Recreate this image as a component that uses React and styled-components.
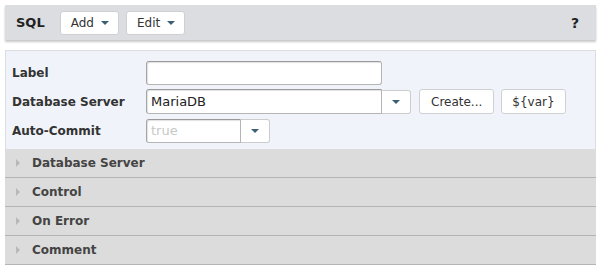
import React from "react";
import styled, { createGlobalStyle } from "styled-components";

const GlobalStyle = createGlobalStyle`
  html, body {
    margin: 0;
    padding: 0;
    background: #ffffff;
    font-family: "DejaVu Sans", Verdana, sans-serif;
    font-size: 12px;
    color: #333;
  }
`;

const Page = styled.div`
  padding: 5px 6px 0 5px;
  width: 591px;
`;

const Toolbar = styled.div`
  display: flex;
  align-items: center;
  height: 35px;
  background: #dcdde0;
  box-shadow: 0 2px 2px rgba(0, 0, 0, 0.22);
  padding: 0 17px 0 11px;
  gap: 7px;
`;

const Title = styled.div`
  font-weight: bold;
  font-size: 13px;
  color: #222;
  margin-right: 8px;
`;

const MenuButton = styled.button`
  display: flex;
  align-items: center;
  gap: 7px;
  height: 24px;
  padding: 0 9px 0 10px;
  background: #fff;
  border: 1px solid #cfd0d3;
  border-radius: 3px;
  font-family: inherit;
  font-size: 12px;
  color: #333;
`;

const Caret = styled.span`
  width: 0;
  height: 0;
  border-left: 4px solid transparent;
  border-right: 4px solid transparent;
  border-top: 4px solid #3d5f73;
`;

const Help = styled.div`
  margin-left: auto;
  font-weight: bold;
  font-size: 14px;
  color: #222;
`;

const Form = styled.div`
  margin-top: 10px;
  background: #f0f4fa;
  border: 1px solid #dcdde0;
  border-bottom: none;
  padding: 9px 0 6px 6px;
  display: flex;
  flex-direction: column;
  gap: 4px;
`;

const Row = styled.div`
  display: flex;
  align-items: center;
  height: 25px;
`;

const Label = styled.div`
  width: 134px;
  font-weight: bold;
  font-size: 12px;
  color: #333;
`;

const TextBox = styled.div`
  box-sizing: border-box;
  width: ${(p) => p.$w}px;
  height: ${(p) => (p.$h || 24)}px;
  background: #fff;
  border: 1px solid #b5b5b5;
  border-top-color: #9a9a9a;
  border-left-color: #a5a5a5;
  border-radius: ${(p) => (p.$joined ? "3px 0 0 3px" : "3px")};
  box-shadow: inset 1px 1px 1px rgba(0, 0, 0, 0.12);
  padding: 0 4px;
  display: flex;
  align-items: center;
  font-size: 13px;
  color: ${(p) => (p.$muted ? "#c8c8c8" : "#222")};
`;

const DropButton = styled.div`
  box-sizing: border-box;
  width: 29px;
  height: 24px;
  background: #fff;
  border: 1px solid #ccc;
  border-left: none;
  border-radius: 0 3px 3px 0;
  display: flex;
  align-items: center;
  justify-content: center;
`;

const Button = styled.button`
  box-sizing: border-box;
  height: 25px;
  margin-left: ${(p) => p.$ml || 7}px;
  padding: 0 ${(p) => p.$px || 11}px;
  background: #fff;
  border: 1px solid #cfd0d3;
  border-radius: 3px;
  font-family: inherit;
  font-size: 12px;
  color: #333;
`;

const Section = styled.div`
  display: flex;
  align-items: center;
  height: 28px;
  background: #dcdcdc;
  border-bottom: 1px solid #b4b4b4;
  padding-left: 11px;
`;

const Arrow = styled.span`
  width: 0;
  height: 0;
  border-top: 4px solid transparent;
  border-bottom: 4px solid transparent;
  border-left: 4px solid #b8b8b8;
  margin-right: 12px;
`;

const SectionTitle = styled.div`
  font-weight: bold;
  font-size: 12px;
  color: #444;
`;

const sections = ["Database Server", "Control", "On Error", "Comment"];

export default function App() {
  return (
    <>
      <GlobalStyle />
      <Page>
        <Toolbar>
          <Title>SQL</Title>
          <MenuButton>Add <Caret /></MenuButton>
          <MenuButton>Edit <Caret /></MenuButton>
          <Help>?</Help>
        </Toolbar>
        <Form>
          <Row>
            <Label>Label</Label>
            <TextBox $w={236} />
          </Row>
          <Row>
            <Label>Database Server</Label>
            <TextBox $w={236} $h={25} $joined>MariaDB</TextBox>
            <DropButton><Caret /></DropButton>
            <Button $ml={8} $px={11}>Create...</Button>
            <Button $ml={7} $px={10}>{"${var}"}</Button>
          </Row>
          <Row>
            <Label>Auto-Commit</Label>
            <TextBox $w={95} $joined $muted>true</TextBox>
            <DropButton><Caret /></DropButton>
          </Row>
        </Form>
        {sections.map((s) => (
          <Section key={s}>
            <Arrow />
            <SectionTitle>{s}</SectionTitle>
          </Section>
        ))}
      </Page>
    </>
  );
}
